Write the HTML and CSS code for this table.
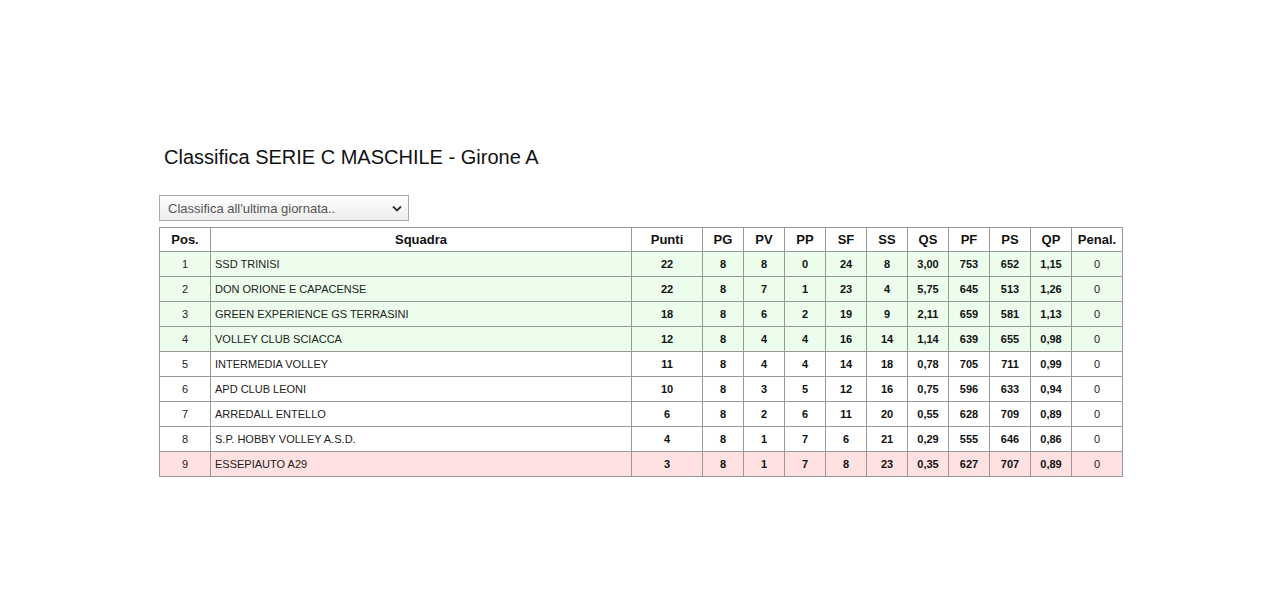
FILE: index.html
```html
<!DOCTYPE html>
<html lang="it">
<head>
<meta charset="utf-8">
<title>Classifica SERIE C MASCHILE - Girone A</title>
<link rel="stylesheet" href="styles.css">
</head>
<body>
<div class="page">
  <h1 class="title">Classifica SERIE C MASCHILE - Girone A</h1>
  <div class="select">
    <span class="select-text">Classifica all'ultima giornata..</span>
    <svg class="chev" width="10" height="7" viewBox="0 0 10 7"><path d="M1 1.5 L5 5.5 L9 1.5" fill="none" stroke="#333" stroke-width="1.8"/></svg>
  </div>
  <table class="standings">
    <colgroup>
      <col class="c-pos"><col class="c-team"><col class="c-pts">
      <col class="c-n"><col class="c-n"><col class="c-n"><col class="c-n"><col class="c-n">
      <col class="c-n"><col class="c-n"><col class="c-n"><col class="c-n"><col class="c-pen">
    </colgroup>
    <thead>
      <tr><th>Pos.</th><th>Squadra</th><th>Punti</th><th>PG</th><th>PV</th><th>PP</th><th>SF</th><th>SS</th><th>QS</th><th>PF</th><th>PS</th><th>QP</th><th>Penal.</th></tr>
    </thead>
    <tbody>
      <tr class="promo"><td class="pos">1</td><td class="team">SSD TRINISI</td><td>22</td><td>8</td><td>8</td><td>0</td><td>24</td><td>8</td><td>3,00</td><td>753</td><td>652</td><td>1,15</td><td class="pen">0</td></tr>
      <tr class="promo"><td class="pos">2</td><td class="team">DON ORIONE E CAPACENSE</td><td>22</td><td>8</td><td>7</td><td>1</td><td>23</td><td>4</td><td>5,75</td><td>645</td><td>513</td><td>1,26</td><td class="pen">0</td></tr>
      <tr class="promo"><td class="pos">3</td><td class="team">GREEN EXPERIENCE GS TERRASINI</td><td>18</td><td>8</td><td>6</td><td>2</td><td>19</td><td>9</td><td>2,11</td><td>659</td><td>581</td><td>1,13</td><td class="pen">0</td></tr>
      <tr class="promo"><td class="pos">4</td><td class="team">VOLLEY CLUB SCIACCA</td><td>12</td><td>8</td><td>4</td><td>4</td><td>16</td><td>14</td><td>1,14</td><td>639</td><td>655</td><td>0,98</td><td class="pen">0</td></tr>
      <tr><td class="pos">5</td><td class="team">INTERMEDIA VOLLEY</td><td>11</td><td>8</td><td>4</td><td>4</td><td>14</td><td>18</td><td>0,78</td><td>705</td><td>711</td><td>0,99</td><td class="pen">0</td></tr>
      <tr><td class="pos">6</td><td class="team">APD CLUB LEONI</td><td>10</td><td>8</td><td>3</td><td>5</td><td>12</td><td>16</td><td>0,75</td><td>596</td><td>633</td><td>0,94</td><td class="pen">0</td></tr>
      <tr><td class="pos">7</td><td class="team">ARREDALL ENTELLO</td><td>6</td><td>8</td><td>2</td><td>6</td><td>11</td><td>20</td><td>0,55</td><td>628</td><td>709</td><td>0,89</td><td class="pen">0</td></tr>
      <tr><td class="pos">8</td><td class="team">S.P. HOBBY VOLLEY A.S.D.</td><td>4</td><td>8</td><td>1</td><td>7</td><td>6</td><td>21</td><td>0,29</td><td>555</td><td>646</td><td>0,86</td><td class="pen">0</td></tr>
      <tr class="releg"><td class="pos">9</td><td class="team">ESSEPIAUTO A29</td><td>3</td><td>8</td><td>1</td><td>7</td><td>8</td><td>23</td><td>0,35</td><td>627</td><td>707</td><td>0,89</td><td class="pen">0</td></tr>
    </tbody>
  </table>
</div>
</body>
</html>
```

FILE: styles.css
```css
html, body {
  margin: 0;
  padding: 0;
  background: #ffffff;
  font-family: "Liberation Sans", Arial, sans-serif;
  color: #000;
}

.page {
  padding: 146px 0 0 159px;
}

.title {
  margin: 0 0 0 5px;
  font-size: 20px;
  font-weight: normal;
  line-height: 23px;
  color: #111;
}

.select {
  margin-top: 26px;
  height: 24px;
  border: 1px solid #aaaaaa;
  background: linear-gradient(#ffffff, #ececec);
  display: flex;
  align-items: center;
  justify-content: space-between;
  padding: 0 6px 0 8px;
  box-sizing: content-box;
  width: 234px;
}

.select-text {
  font-size: 13px;
  color: #555;
}

.chev {
  display: block;
}

.standings {
  margin-top: 6px;
  border-collapse: collapse;
  table-layout: fixed;
  width: 963px;
}

.c-pos { width: 51px; }
.c-team { width: 421px; }
.c-pts { width: 71px; }
.c-n { width: 41px; }
.c-pen { width: 51px; }

.standings th,
.standings td {
  border: 1px solid #999999;
  padding: 0;
  text-align: center;
}

.standings th {
  height: 23px;
  font-size: 13px;
  font-weight: bold;
  color: #111;
}

.standings td {
  height: 24px;
  font-size: 11px;
  font-weight: bold;
  color: #111;
}

.standings td.pos,
.standings td.pen,
.standings td.team {
  font-weight: normal;
  color: #222;
}

.standings td.team {
  text-align: left;
  padding-left: 4px;
}

.standings tr.promo td {
  background: #ecfdec;
}

.standings tr.releg td {
  background: #ffe1e1;
}
```
